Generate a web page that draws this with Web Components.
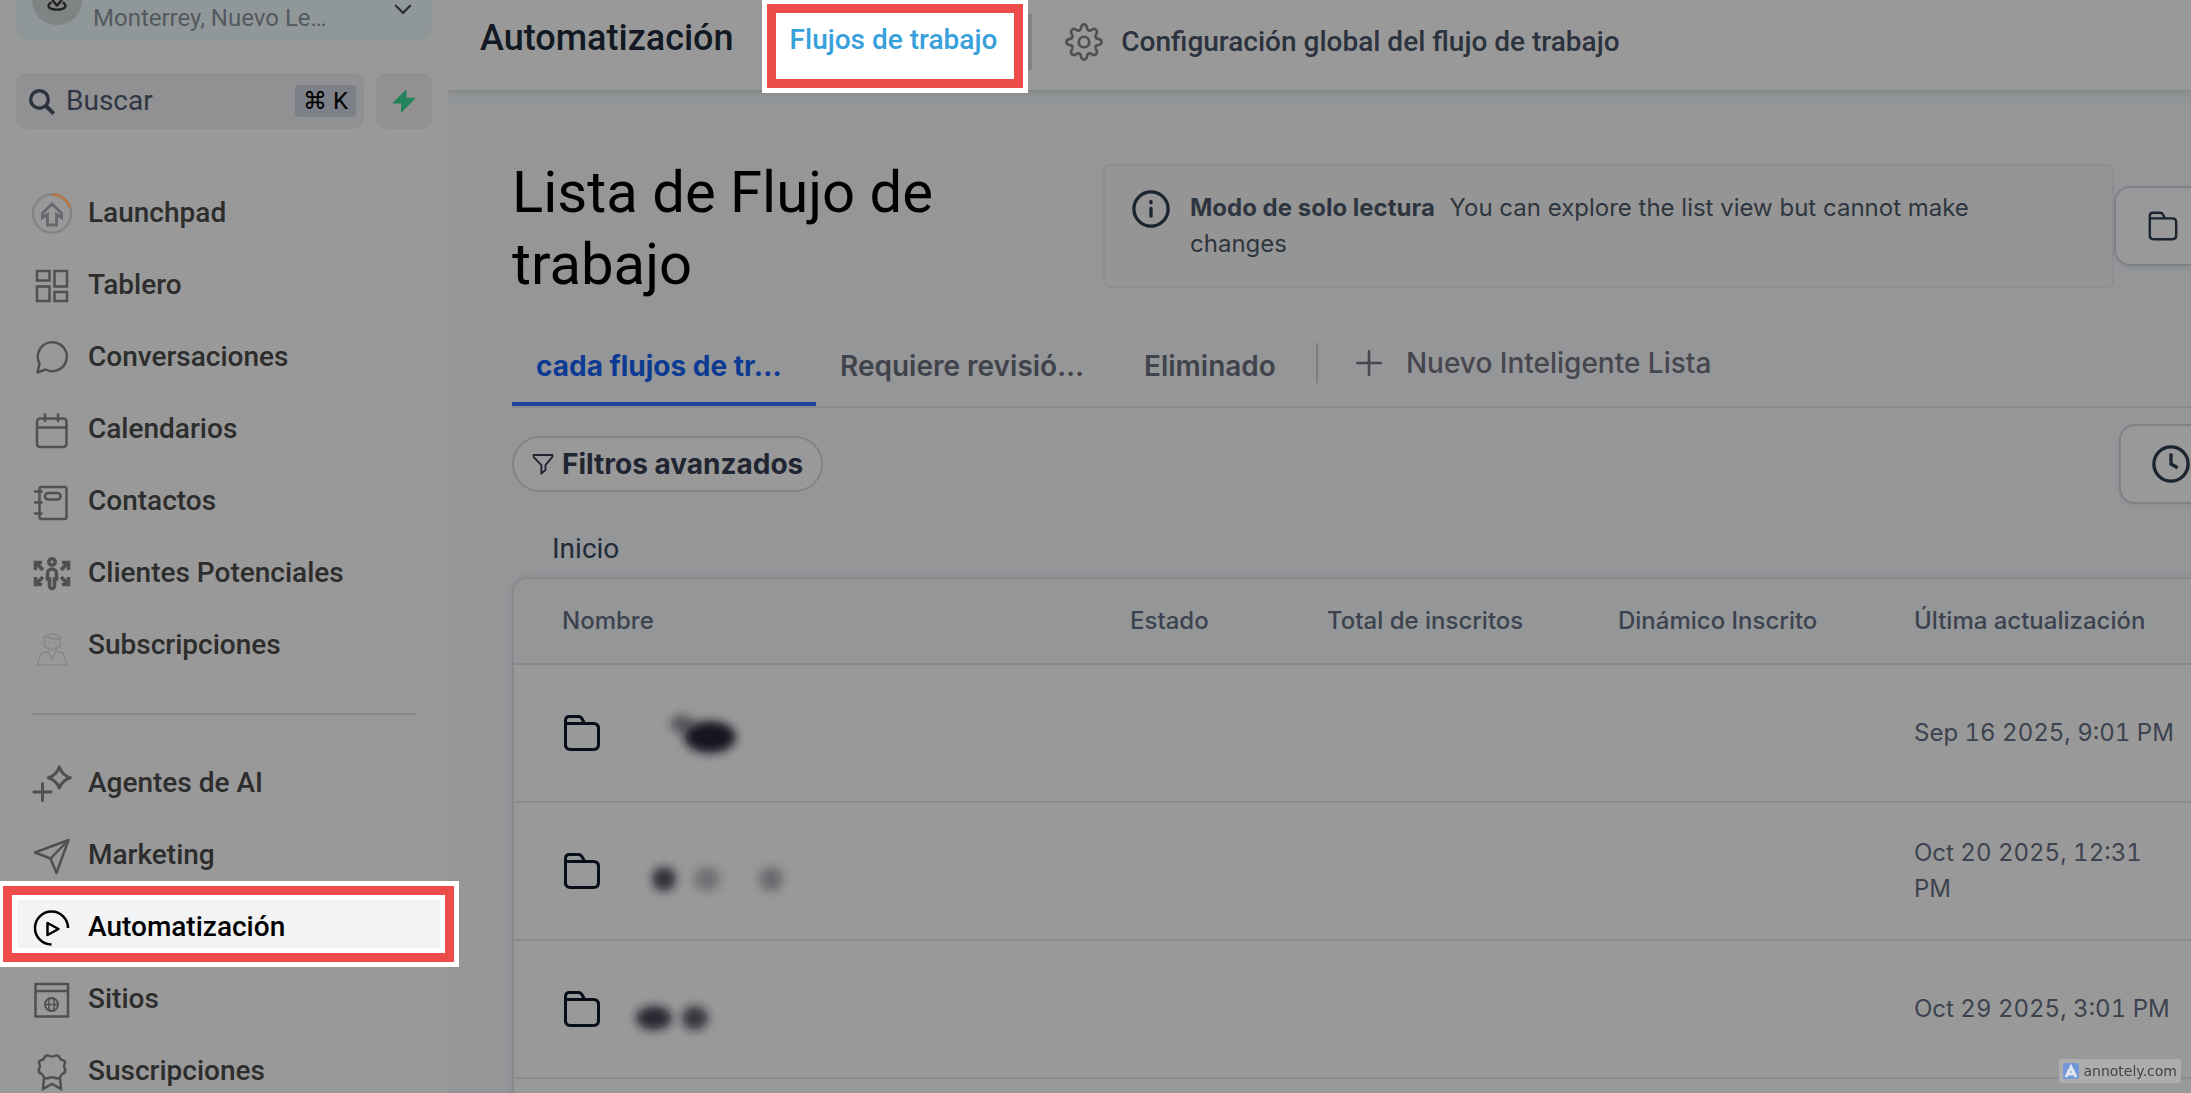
<!DOCTYPE html>
<html lang="es">
<head>
<meta charset="UTF-8">
<meta name="viewport" content="width=device-width, initial-scale=1.0">
<title>Automatización</title>
<style>
    html, body {
        height: 100%;
        margin: 0;
    }
    body {
        overflow: hidden;
        background: #949698;
        font-family: Roboto, sans-serif;
    }
</style>
</head>
<body>
<workflow-app></workflow-app>

<script>
// Icon shapes, drawn on a 40x40 grid
const ICONS = {
    launchpad: `<circle cx="20" cy="20.500" r="19" stroke="#828282" stroke-width="2.200"/>
        <path d="M20 1.500a19 19 0 0 1 18 13" stroke="#b3774a" stroke-width="2.800"/>
        <path d="M20 11l9.500 9v4.500L24.500 21.500V32h-9V21.500l-5 3V20z" stroke="#66686e" stroke-width="2.800"/>`,
    dashboard: `<path d="M5 6h12.500v9.500H5zM22.500 6H35v15.500H22.500zM5 21.500h12.500V36H5zM22.500 27H35v9H22.500z" stroke-width="2.500"/>`,
    chat: `<path d="M5.500 35.500l2-9A14.500 14.500 0 1 1 13.500 32.500z" stroke-linejoin="round"/>`,
    calendar: `<rect x="5" y="9.500" width="29.500" height="28.500" rx="3"/><path d="M5 18.500h29.500M13 4.500V13M26 4.500V13"/>`,
    contacts: `<rect x="7.500" y="6" width="27" height="32" rx="2"/><rect x="13" y="12" width="15.500" height="6.500" rx="3"/><path d="M2 10.500h8.500M2 21.500h8.500M2 32.500h8.500"/>`,
    leads: `<g stroke-width="3.600"><circle cx="20" cy="9" r="3.200"/><path d="M17.500 33V26h-2v-5.500a4.500 4.500 0 0 1 9 0V26h-2v7a2.500 2.500 0 0 1-5 0z"/>
        <path d="M3.500 17V9.500H10M4 10l7 7M36.500 17V9.500H30M36 10l-7 7M3.500 24v7.500H10M4 31l7-7M36.500 24v7.500H30M36 31l-7-7"/></g>`,
    person: `<g stroke="#86868a" stroke-width="1.300"><path d="M12.500 11.500L20 8.500l8 3v10L20 25l-7.500-3.500zM12.500 11.500l7 2 8.500.500M17 17v1.500M23 17v1.500M17 24v3l3 7 4-7v-3M17 26.500l-8 1.500-3.500 12h29.500L31 28l-7-1.500"/></g>`,
    sparkle: `<g stroke-width="3" stroke-linecap="round" stroke-linejoin="round"><path d="M27.300 4q3 8.500 11 10.700-8 2.500-11 10.300-3-7.800-11-10.300 8-2.200 11-10.700z"/><path d="M10.500 20.500v17M2 29h17"/></g>`,
    send: `<path d="M36.500 5L3 17.500l15.500 6L24.500 38zM36.500 5l-18 18.500" stroke-linejoin="round"/>`,
    play: `<path d="M36 21A16.500 16.500 0 1 0 19.500 37.500"/><path d="M15.500 16v12l11-6z" stroke-linejoin="round"/>`,
    site: `<path d="M3.500 5h32.500V37.500H3.500zM3.500 12H36"/><circle cx="19.500" cy="25.500" r="6.500" stroke-width="2"/><ellipse cx="19.500" cy="25.500" rx="2.800" ry="6.500" stroke-width="1.500"/><path d="M13 25.500h13" stroke-width="1.500"/>`,
    award: `<path d="M16 4.500q4 2 8 0 3-.500 4 3 1 1.500 3.500 2 2.500 1 1 4-1 2.500.500 4.500 1 3.500-2 4.500-2 1-2.500 3-1.500 3-5 1.500-3.500-1.500-7 0-3.500 1.500-5-1.500-.500-2-2.500-3-3-1-2-4.500 1.500-2 .500-4.500-1.500-3 1-4 2.500-.500 3.500-2 1-3.500 4-3z" stroke-linejoin="round"/><path d="M12 27l-1 11 9-5 9 5-1-11"/>`,
    pin: `<path d="M14 20L20 27l6-7M13 23c-6 3-5 9 7 9s13-6 7-9" stroke-width="3" stroke-linejoin="round"/>`,
    chevron: `<path d="M7 14l13 13 13-13" stroke-width="4" stroke-linecap="round" stroke-linejoin="round"/>`,
    search: `<circle cx="17" cy="17" r="13" stroke-width="5"/><path d="M26 26l12 12" stroke-width="6"/>`,
    bolt: `<path d="M23 3L3 23h14l-1 14 21-21H23z" fill="#22835a" stroke="#22835a" stroke-linejoin="round"/>`,
    gear: `<path d="M17 4.500c1-4 5-4 6 0 .500 3.500 2.500 4.500 5.500 2.500 3.500-2 6.500 1 4.500 4.500-2 3-1 5 2.500 5.500 4 1 4 5 0 6-3.500.500-4.500 2.500-2.500 5.500 2 3.500-1 6.500-4.500 4.500-3-2-5-1-5.500 2.500-1 4-5 4-6 0-.500-3.500-2.500-4.500-5.500-2.500-3.500 2-6.500-1-4.500-4.500 2-3 1-5-2.500-5.500-4-1-4-5 0-6 3.500-.500 4.500-2.500 2.500-5.500-2-3.500 1-6.500 4.500-4.500 3 2 5 1 5.500-2.500z" stroke-width="2.800"/><circle cx="20" cy="20" r="5.500" stroke-width="2.800"/>`,
    info: `<circle cx="20" cy="20" r="18" stroke-width="3.500"/><path d="M20 19.500v8M20 12v1.500" stroke-width="3.500" stroke-linecap="round"/>`,
    folder: `<path d="M3.500 34V7.500q0-4 4-4h9q2.500 0 4 3l2 4M3.500 10.500h28q5 0 5 5v16q0 5-5 5h-23q-5 0-5-5z" stroke-width="3" stroke-linejoin="round"/>`,
    plus: `<path d="M20 2v36M2 20h36" stroke-width="4" stroke-linecap="round"/>`,
    filter: `<path d="M3 3.500h34q1.500 2-1 5L24.500 22v9L17 37.500V22L4 8.500q-2.500-3-1-5z" stroke-width="3.500" stroke-linejoin="round"/>`,
    clock: `<circle cx="20" cy="20" r="18" stroke-width="3.500"/><path d="M20 9v11l7 4" stroke-width="3.500"/>`
};

function attach(el, html) {
    const shadow = el.attachShadow({ mode: 'open' });
    shadow.innerHTML = html;
    return shadow;
}

class AppIcon extends HTMLElement {
    constructor() {
        super();
        const size = this.getAttribute('size') || 40;
        attach(this, `
            <style>
                :host { display: block; flex: none; }
                svg { display: block; overflow: visible; }
            </style>
            <svg width="${size}" height="${size}" viewBox="0 0 40 40" fill="none" stroke="currentColor" stroke-width="2.500" aria-hidden="true">${ICONS[this.getAttribute('name')] || ''}</svg>
        `);
    }
}

// Red and white frame that lies over the element it marks
class FocusFrame extends HTMLElement {
    constructor() {
        super();
        attach(this, `
            <style>
                :host {
                    position: absolute;
                    box-sizing: border-box;
                    border: 5px solid #fff;
                    box-shadow: inset 0 0 0 9px #ec4d4b, inset 0 0 0 14px #fff;
                    pointer-events: none;
                }
            </style>
        `);
    }
}

class NavItem extends HTMLElement {
    constructor() {
        super();
        const active = this.hasAttribute('active');
        attach(this, `
            <style>
                :host { display: block; position: relative; }
                a {
                    display: flex;
                    align-items: center;
                    gap: 16px;
                    height: 72px;
                    padding: 0 32px;
                    color: #2d2d2d;
                    font-size: 28px;
                    font-weight: 500;
                    line-height: 32px;
                    text-decoration: none;
                    white-space: nowrap;
                }
                app-icon { color: #505050; }
                :host([active]) { z-index: 2; }
                :host([active]) a { background: #f2f3f5; color: #000; }
                :host([active]) app-icon { color: #000; }
                focus-frame { inset: -10px -11px -4px -2px; }
            </style>
            <a href="#"${active ? ' aria-current="page"' : ''}>
                <app-icon name="${this.getAttribute('icon')}"></app-icon>
                <span><slot></slot></span>
            </a>
            ${active ? '<focus-frame></focus-frame>' : ''}
        `);
    }
}

class AppSidebar extends HTMLElement {
    constructor() {
        super();
        attach(this, `
            <style>
                :host {
                    display: block;
                    position: relative;
                    z-index: 1;
                    background: #999;
                }
                .location {
                    display: flex;
                    align-items: flex-end;
                    box-sizing: border-box;
                    width: calc(100% - 32px);
                    height: 100px;
                    margin: -59px 16px 0;
                    padding: 0 16px 9px;
                    border: 0;
                    border-radius: 14px;
                    background: #909799;
                    color: #54595f;
                    font: 24px/28px Roboto, sans-serif;
                    text-align: left;
                }
                .avatar {
                    display: grid;
                    place-items: center;
                    width: 50px;
                    height: 50px;
                    margin: 0 11px 7px 0;
                    border-radius: 50%;
                    background: #808384;
                    color: #222;
                }
                .place { flex: 1; }
                .location > app-icon { margin: 0 2px 12px 0; color: #2a2f36; }
                .tools {
                    display: flex;
                    gap: 12px;
                    margin: 32px 16px 48px;
                }
                .search {
                    display: flex;
                    flex: 1;
                    align-items: center;
                    gap: 11px;
                    height: 56px;
                    min-width: 0;
                    box-sizing: border-box;
                    padding: 0 8px 0 12px;
                    border-radius: 10px;
                    background: #919193;
                    color: #2c333f;
                }
                input {
                    flex: 1;
                    min-width: 0;
                    padding: 0;
                    border: 0;
                    outline: 0;
                    background: none;
                    font: 28px/32px Roboto, sans-serif;
                }
                input::placeholder { color: #2f3642; opacity: 1; }
                kbd {
                    padding: 0 8px;
                    border-radius: 4px;
                    background: #7c8087;
                    color: #000;
                    font: 24px/32px Roboto, "DejaVu Sans", sans-serif;
                }
                .quick {
                    display: grid;
                    place-items: center;
                    width: 56px;
                    padding: 0;
                    border: 0;
                    border-radius: 10px;
                    background: #919193;
                }
                hr {
                    height: 2px;
                    margin: 32px;
                    border: 0;
                    background: #888;
                }
            </style>
            <button class="location" type="button">
                <span class="avatar"><app-icon name="pin" size="32"></app-icon></span>
                <span class="place">Monterrey, Nuevo Le…</span>
                <app-icon name="chevron" size="22"></app-icon>
            </button>
            <div class="tools">
                <label class="search">
                    <app-icon name="search" size="27"></app-icon>
                    <input type="search" placeholder="Buscar" aria-label="Buscar">
                    <kbd>⌘ K</kbd>
                </label>
                <button class="quick" type="button" aria-label="Acciones rápidas"><app-icon name="bolt" size="24"></app-icon></button>
            </div>
            <nav>
                <nav-item icon="launchpad">Launchpad</nav-item>
                <nav-item icon="dashboard">Tablero</nav-item>
                <nav-item icon="chat">Conversaciones</nav-item>
                <nav-item icon="calendar">Calendarios</nav-item>
                <nav-item icon="contacts">Contactos</nav-item>
                <nav-item icon="leads">Clientes Potenciales</nav-item>
                <nav-item icon="person">Subscripciones</nav-item>
                <hr>
                <nav-item icon="sparkle">Agentes de AI</nav-item>
                <nav-item icon="send">Marketing</nav-item>
                <nav-item icon="play" active>Automatización</nav-item>
                <nav-item icon="site">Sitios</nav-item>
                <nav-item icon="award">Suscripciones</nav-item>
            </nav>
        `);
    }
}

class TopBar extends HTMLElement {
    constructor() {
        super();
        attach(this, `
            <style>
                :host {
                    display: flex;
                    align-items: flex-start;
                    position: relative;
                    box-sizing: border-box;
                    height: 90px;
                    padding-left: 32px;
                    background: #999;
                    box-shadow: 0 2px 8px #7f8480;
                    font-size: 28px;
                    font-weight: 500;
                    line-height: 32px;
                    white-space: nowrap;
                }
                h2 {
                    margin: 17px 28px 0 0;
                    color: #121923;
                    font-size: 36px;
                    font-weight: 500;
                    line-height: 42px;
                }
                a { color: #2c333e; text-decoration: none; }
                .current {
                    position: relative;
                    height: 90px;
                    box-sizing: border-box;
                    padding: 24px 30px 0 28px;
                    background: #fff;
                    color: #38a0db;
                }
                focus-frame { inset: -1px -1px -3px 0; }
                .rule {
                    width: 4px;
                    height: 56px;
                    margin: 14px 33px 0 1px;
                    background: #808385;
                }
                .settings {
                    display: flex;
                    align-items: center;
                    gap: 18px;
                    margin-top: 23px;
                }
                app-icon { color: #505050; }
            </style>
            <h2>Automatización</h2>
            <a class="current" href="#" aria-current="page">Flujos de trabajo<focus-frame></focus-frame></a>
            <span class="rule"></span>
            <a class="settings" href="#"><app-icon name="gear" size="38"></app-icon>Configuración global del flujo de trabajo</a>
        `);
    }
}

class NoticeBanner extends HTMLElement {
    constructor() {
        super();
        attach(this, `
            <style>
                :host {
                    display: flex;
                    align-items: flex-start;
                    gap: 20px;
                    box-sizing: border-box;
                    min-height: 124px;
                    padding: 24px 48px 24px 27px;
                    border: 2px solid #8e8e92;
                    border-radius: 6px;
                    background: #959595;
                    color: #2e353f;
                    font: 24px/36px Inter, sans-serif;
                }
                app-icon { color: #1c2431; }
                p { margin: 0; }
                strong { margin-right: 8px; font-weight: 700; }
            </style>
            <app-icon name="info" size="38"></app-icon>
            <p><strong><slot name="title"></slot></strong> <slot></slot></p>
        `);
    }
}

class IconButton extends HTMLElement {
    constructor() {
        super();
        attach(this, `
            <style>
                :host { display: block; flex: none; }
                button {
                    display: flex;
                    align-items: center;
                    width: 100%;
                    height: 80px;
                    padding: 0 31px;
                    border: 2px solid #7e8288;
                    border-radius: 16px;
                    background: #999;
                    box-shadow: 0 2px 4px #8a8c8e;
                    color: #1c2431;
                }
            </style>
            <button type="button" aria-label="${this.getAttribute('label')}">
                <app-icon name="${this.getAttribute('icon')}" size="${this.getAttribute('size')}"></app-icon>
            </button>
        `);
    }
}

class ListTabs extends HTMLElement {
    constructor() {
        super();
        const tabs = JSON.parse(this.getAttribute('tabs') || '[]');

        let tabsHtml = '';
        tabs.forEach((tab, idx) => {
            tabsHtml += `<button class="tab" type="button" role="tab" aria-selected="${idx === 0}">${tab}</button>`;
        });

        const shadow = attach(this, `
            <style>
                :host {
                    display: flex;
                    align-items: flex-start;
                    height: 82px;
                    border-bottom: 2px solid #888a8c;
                }
                button {
                    border: 0;
                    background: none;
                    color: #41434b;
                    font: 600 28px/40px Inter, sans-serif;
                    text-align: left;
                    white-space: nowrap;
                }
                .tabs { display: flex; height: 100%; }
                .tab {
                    box-sizing: border-box;
                    padding: 6px 24px 0;
                    border-bottom: 4px solid transparent;
                }
                .tab:not(:last-child) { width: 304px; }
                .tab[aria-selected="true"] {
                    border-color: #1c429c;
                    color: #0d3a92;
                    font-weight: 700;
                }
                .rule {
                    width: 2px;
                    height: 40px;
                    margin: 19px 38px 0 16px;
                    background: #7d7e82;
                }
                .new {
                    display: flex;
                    align-items: center;
                    gap: 24px;
                    margin-top: 19px;
                    padding: 0;
                    color: #46464f;
                    font-weight: 500;
                }
            </style>
            <div class="tabs" role="tablist">${tabsHtml}</div>
            <span class="rule"></span>
            <button class="new" type="button"><app-icon name="plus" size="26"></app-icon>Nuevo Inteligente Lista</button>
        `);

        // Logic
        const buttons = shadow.querySelectorAll('.tab');
        buttons.forEach((button) => {
            button.addEventListener('click', () => {
                buttons.forEach((b) => b.setAttribute('aria-selected', b === button));
            });
        });
    }
}

// Folder name that is smudged out: a few soft blots, each [cx, cy, rx, ry, opacity]
class BlurredName extends HTMLElement {
    constructor() {
        super();
        const blots = JSON.parse(this.getAttribute('blots') || '[]');
        const shapes = blots.map(([x, y, rx, ry, o]) =>
            `<ellipse cx="${x}" cy="${y}" rx="${rx}" ry="${ry}" fill="#121724" opacity="${o}" filter="url(#soft)"/>`
        ).join('');
        attach(this, `
            <style>
                :host { display: block; }
                svg { display: block; }
            </style>
            <svg width="200" height="60" viewBox="0 0 200 60" aria-hidden="true">
                <filter id="soft" x="-100%" y="-100%" width="300%" height="300%"><feGaussianBlur stdDeviation="5"/></filter>
                ${shapes}
            </svg>
        `);
    }
}

class FlowTable extends HTMLElement {
    constructor() {
        super();
        const rows = [
            { date: 'Sep 16 2025, 9:01 PM', blots: [[70, 21, 12, 9, 0.5], [98, 34, 26, 16, 1]] },
            { date: 'Oct 20 2025, 12:31 PM', blots: [[52, 38, 12, 12, 0.8], [95, 38, 13, 12, 0.3], [159, 38, 12, 12, 0.35]] },
            { date: 'Oct 29 2025, 3:01 PM', blots: [[42, 39, 18, 12, 0.85], [83, 39, 13, 12, 0.75]] }
        ];

        let rowsHtml = '';
        rows.forEach((row) => {
            rowsHtml += `
                <tr>
                    <td><div class="name"><app-icon name="folder" size="40"></app-icon><blurred-name blots="${JSON.stringify(row.blots)}"></blurred-name></div></td>
                    <td></td>
                    <td></td>
                    <td></td>
                    <td>${row.date}</td>
                </tr>
            `;
        });
        rowsHtml += '<tr><td colspan="5"></td></tr>';

        attach(this, `
            <style>
                :host {
                    display: block;
                    overflow: hidden;
                    border: 2px solid #88898c;
                    border-radius: 16px;
                    background: #999;
                    box-shadow: 0 0 6px #86888a;
                    font: 24px/36px Inter, sans-serif;
                }
                table {
                    width: 100%;
                    table-layout: fixed;
                    border-collapse: separate;
                    border-spacing: 0;
                }
                th, td {
                    box-sizing: border-box;
                    padding: 0 24px;
                    text-align: left;
                }
                th {
                    height: 86px;
                    border-bottom: 2px solid #86888b;
                    background: #949698;
                    color: #3c434f;
                    font-weight: 500;
                }
                td {
                    height: 138px;
                    border-bottom: 2px solid #8a8a90;
                    color: #3c434f;
                    font-variant-numeric: tabular-nums;
                }
                th:first-child, td:first-child { padding-left: 48px; }
                th:last-child, td:last-child { padding-right: 172px; }
                .name {
                    display: flex;
                    align-items: center;
                    gap: 10px;
                    color: #080e19;
                }
            </style>
            <table>
                <colgroup><col><col style="width: 197px"><col style="width: 291px"><col style="width: 296px"><col style="width: 459px"></colgroup>
                <thead>
                    <tr><th>Nombre</th><th>Estado</th><th>Total de inscritos</th><th>Dinámico Inscrito</th><th>Última actualización</th></tr>
                </thead>
                <tbody>${rowsHtml}</tbody>
            </table>
        `);
    }
}

class AnnotelyBadge extends HTMLElement {
    constructor() {
        super();
        attach(this, `
            <style>
                :host {
                    display: flex;
                    align-items: center;
                    gap: 4px;
                    position: fixed;
                    right: 10px;
                    bottom: 10px;
                    z-index: 3;
                    height: 24px;
                    padding: 0 4px;
                    border-radius: 2px;
                    background: #adadad;
                    color: #444;
                    font: 14px/24px "DejaVu Sans", sans-serif;
                }
            </style>
            <svg width="16" height="16" viewBox="0 0 16 16" aria-hidden="true">
                <rect width="16" height="16" rx="2" fill="#7398d8"/>
                <path d="M3 14L8 4l5 10M5 11h6" fill="none" stroke="#e0e5ee" stroke-width="3"/>
            </svg>
            <span>annotely.com</span>
        `);
    }
}

class WorkflowApp extends HTMLElement {
    constructor() {
        super();
        attach(this, `
            <style>
                :host {
                    display: grid;
                    grid-template-columns: 448px minmax(0, 1fr);
                    height: 100vh;
                    overflow: hidden;
                }
                main { min-width: 0; }
                /* the list runs on past the right edge of the window */
                .page { margin: 0 -160px 0 64px; }
                .head {
                    display: flex;
                    align-items: flex-start;
                    padding-top: 66px;
                }
                h1 {
                    flex: none;
                    width: 591px;
                    box-sizing: border-box;
                    margin: 0;
                    padding: 0 120px 0 0;
                    color: #000;
                    font: 400 58px/72px Roboto, sans-serif;
                }
                notice-banner { flex: 1; margin-top: 8px; }
                .head icon-button { width: 237px; margin-top: 30px; }
                list-tabs { margin-top: 24px; }
                .filters {
                    display: flex;
                    align-items: center;
                    justify-content: space-between;
                    margin-top: 16px;
                }
                .filters icon-button { width: 232px; }
                .filter {
                    display: flex;
                    align-items: center;
                    gap: 8px;
                    height: 56px;
                    padding: 0 18px;
                    border: 2px solid #828487;
                    border-radius: 28px;
                    background: #999;
                    color: #1f2632;
                    font: 700 28px/40px Inter, sans-serif;
                }
                .crumb {
                    display: block;
                    margin: 25px 0 8px 40px;
                    color: #222a38;
                    font-size: 28px;
                    line-height: 40px;
                    text-decoration: none;
                }
            </style>
            <app-sidebar></app-sidebar>
            <main>
                <top-bar></top-bar>
                <div class="page">
                    <div class="head">
                        <h1>Lista de Flujo de trabajo</h1>
                        <notice-banner><span slot="title">Modo de solo lectura</span>You can explore the list view but cannot make changes</notice-banner>
                        <icon-button icon="folder" size="32" label="Crear carpeta"></icon-button>
                    </div>
                    <list-tabs tabs='["cada flujos de tr…", "Requiere revisió…", "Eliminado"]'></list-tabs>
                    <div class="filters">
                        <button class="filter" type="button"><app-icon name="filter" size="22"></app-icon>Filtros avanzados</button>
                        <icon-button icon="clock" size="38" label="Historial"></icon-button>
                    </div>
                    <a class="crumb" href="#">Inicio</a>
                    <flow-table></flow-table>
                </div>
            </main>
            <annotely-badge></annotely-badge>
        `);
    }
}

customElements.define('app-icon', AppIcon);
customElements.define('focus-frame', FocusFrame);
customElements.define('nav-item', NavItem);
customElements.define('app-sidebar', AppSidebar);
customElements.define('top-bar', TopBar);
customElements.define('notice-banner', NoticeBanner);
customElements.define('icon-button', IconButton);
customElements.define('list-tabs', ListTabs);
customElements.define('blurred-name', BlurredName);
customElements.define('flow-table', FlowTable);
customElements.define('annotely-badge', AnnotelyBadge);
customElements.define('workflow-app', WorkflowApp);
</script>
</body>
</html>
